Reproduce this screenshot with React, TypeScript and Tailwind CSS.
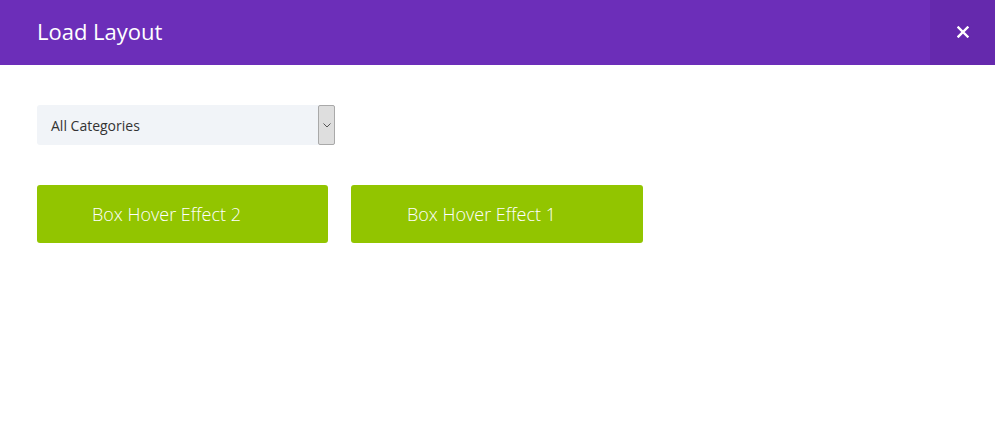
import React from "react";

export default function App() {
  const font = { fontFamily: '"Open Sans", sans-serif' };
  return (
    <div className="w-[995px] h-[432px] bg-white" style={font}>
      <div className="flex h-[65px] bg-[#6c2eb9]">
        <div className="flex flex-1 items-center pl-[37px] pb-[3px] text-[22px] text-white">
          Load Layout
        </div>
        <div className="flex w-[65px] items-center justify-center bg-[#6529ad] pb-[2px] text-white">
          <svg width="12" height="12" viewBox="0 0 12 12">
            <path d="M1.5 1.5 L10.5 10.5 M10.5 1.5 L1.5 10.5" stroke="white" strokeWidth="2.4" strokeLinecap="square" />
          </svg>
        </div>
      </div>
      <div className="px-[37px] pt-[40px]">
        <div className="flex h-[40px] w-[298px] items-stretch rounded-[3px] bg-[#f1f4f8]">
          <div className="flex flex-1 items-center pl-[14px] text-[14px] text-[#333]">
            All Categories
          </div>
          <div className="flex w-[17px] items-center justify-center rounded-[2px] border border-[#a9a9a9] bg-[#dedede]">
            <svg width="8" height="5" viewBox="0 0 8 5">
              <path d="M0.5 0.5 L4 4 L7.5 0.5" stroke="#555" strokeWidth="1" fill="none" />
            </svg>
          </div>
        </div>
        <div className="mt-[40px] flex gap-[23px]">
          <div className="flex h-[58px] w-[291px] items-center rounded-[3px] bg-[#92c500] pl-[55px] text-[18px] font-light text-white">
            Box Hover Effect 2
          </div>
          <div className="flex h-[58px] w-[292px] items-center rounded-[3px] bg-[#92c500] pl-[56px] text-[18px] font-light text-white">
            Box Hover Effect 1
          </div>
        </div>
      </div>
    </div>
  );
}
